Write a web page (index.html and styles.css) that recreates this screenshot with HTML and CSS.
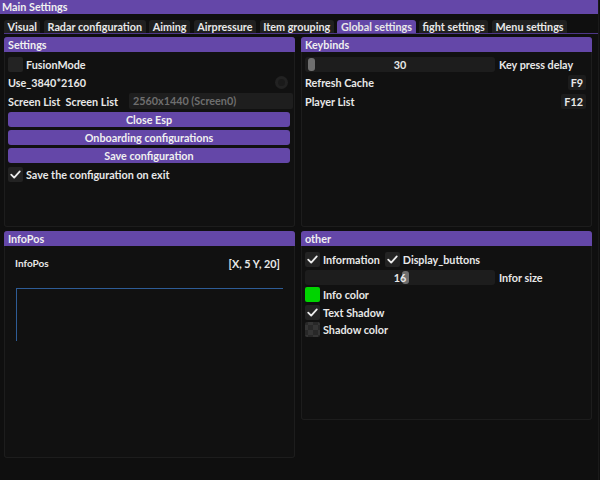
FILE: index.html
```html
<!DOCTYPE html>
<html>
<head>
<meta charset="utf-8">
<link rel="stylesheet" href="styles.css">
</head>
<body>
<div class="window">
  <div class="titlebar">Main Settings</div>
  <div class="tabs">
    <div class="tab">Visual</div>
    <div class="tab">Radar configuration</div>
    <div class="tab">Aiming</div>
    <div class="tab">Airpressure</div>
    <div class="tab">Item grouping</div>
    <div class="tab active">Global settings</div>
    <div class="tab">fight settings</div>
    <div class="tab">Menu settings</div>
  </div>
  <div class="tabline"></div>
  <div class="columns">
    <div class="col">
      <section class="panel p-settings">
        <div class="phead">Settings</div>
        <div class="pbody rows">
          <div class="row"><span class="box"></span><span class="lbl">FusionMode</span></div>
          <div class="row spread"><span>Use_3840*2160</span><span class="radio"><span class="dot"></span></span></div>
          <div class="row"><span class="pair">Screen List&nbsp;&nbsp;Screen List</span><span class="combo">2560x1440 (Screen0)</span></div>
          <div class="btn">Close Esp</div>
          <div class="btn">Onboarding configurations</div>
          <div class="btn">Save configuration</div>
          <div class="row"><span class="box checked"><svg viewBox="0 0 15 15"><path d="M3.2 7.6 L6.2 10.6 L11.8 4.4"/></svg></span><span class="lbl">Save the configuration on exit</span></div>
        </div>
      </section>
      <section class="panel p-info">
        <div class="phead">InfoPos</div>
        <div class="pbody infobody">
          <div class="inforow"><span class="small">InfoPos</span><span>[X, 5 Y, 20]</span></div>
          <div class="corner"></div>
        </div>
      </section>
    </div>
    <div class="col">
      <section class="panel p-keys">
        <div class="phead">Keybinds</div>
        <div class="pbody rows">
          <div class="row"><div class="slider"><span class="grab" style="left:3px"></span><span class="sval">30</span></div><span class="slbl">Key press delay</span></div>
          <div class="row spread"><span>Refresh Cache</span><span class="key">F9</span></div>
          <div class="row spread"><span>Player List</span><span class="key">F12</span></div>
        </div>
      </section>
      <section class="panel p-other">
        <div class="phead">other</div>
        <div class="pbody rows orows">
          <div class="row"><span class="box checked"><svg viewBox="0 0 15 15"><path d="M3.2 7.6 L6.2 10.6 L11.8 4.4"/></svg></span><span class="lbl">Information</span><span class="box checked second"><svg viewBox="0 0 15 15"><path d="M3.2 7.6 L6.2 10.6 L11.8 4.4"/></svg></span><span class="lbl">Display_buttons</span></div>
          <div class="row"><div class="slider"><span class="grab" style="left:97px"></span><span class="sval">16</span></div><span class="slbl">Infor size</span></div>
          <div class="row"><span class="swatch green"></span><span class="lbl">Info color</span></div>
          <div class="row"><span class="box checked"><svg viewBox="0 0 15 15"><path d="M3.2 7.6 L6.2 10.6 L11.8 4.4"/></svg></span><span class="lbl">Text Shadow</span></div>
          <div class="row"><span class="swatch checker"></span><span class="lbl">Shadow color</span></div>
        </div>
      </section>
    </div>
  </div>
</div>
</body>
</html>
```

FILE: styles.css
```css
html, body {
  margin: 0;
  padding: 0;
  background: #0f0f0f;
}
body {
  width: 600px;
  height: 480px;
  overflow: hidden;
  font-family: Lato, "Open Sans", sans-serif;
  font-weight: 700;
  font-size: 10.8px;
  color: #e8e8e8;
}
.window {
  width: 598px;
  height: 480px;
  border-right: 1px solid #1a1a1a;
}
.titlebar {
  height: 14px;
  line-height: 14px;
  background: #6447a8;
  padding-left: 2px;
  color: #f0f0f0;
}
.tabs {
  display: flex;
  gap: 3.5px;
  margin-top: 6px;
  padding-left: 4px;
  height: 13px;
}
.tab {
  height: 13px;
  line-height: 13px;
  padding: 0 3.6px;
  background: #202020;
  border-radius: 3px 3px 0 0;
}
.tab.active {
  background: #6447a8;
}
.tabline {
  margin-left: 4px;
  height: 1px;
  background: #4e3788;
}
.columns {
  display: flex;
  gap: 6px;
  margin-top: 3px;
  padding-left: 4px;
}
.col {
  width: 291px;
  display: flex;
  flex-direction: column;
  gap: 4px;
}
.panel {
  background: #111111;
  box-shadow: inset 0 0 0 1px #1d1d1d;
  border-radius: 3px;
  box-sizing: border-box;
}
.p-settings, .p-keys { height: 190px; }
.p-info { height: 227px; }
.p-other { height: 189px; }
.phead {
  height: 15px;
  line-height: 15px;
  background: #6447a8;
  border-radius: 3px 3px 0 0;
  padding-left: 4px;
  color: #f0f0f0;
}
.pbody {
  padding: 5px 5px 0 4px;
}
.rows {
  display: flex;
  flex-direction: column;
  gap: 3.3px;
}
.orows {
  padding-top: 6px;
  gap: 2.6px;
}
.row {
  height: 15px;
  display: flex;
  align-items: center;
}
.row.spread {
  justify-content: space-between;
}
.box {
  width: 15px;
  height: 15px;
  background: #232323;
  border-radius: 2px;
  flex: none;
  display: flex;
}
.box svg {
  width: 15px;
  height: 15px;
}
.box path {
  fill: none;
  stroke: #ececec;
  stroke-width: 1.8;
  stroke-linecap: round;
  stroke-linejoin: round;
}
.box.second {
  margin-left: 5px;
}
.lbl {
  margin-left: 3px;
}
.radio {
  width: 13px;
  height: 13px;
  border-radius: 50%;
  background: #222222;
  margin-right: 2px;
  display: flex;
  align-items: center;
  justify-content: center;
}
.radio .dot {
  width: 7px;
  height: 7px;
  border-radius: 50%;
  background: #1a1a1a;
}
.pair {
  width: 121px;
  flex: none;
}
.combo {
  flex: 1;
  height: 16px;
  line-height: 16px;
  background: #1e1e1e;
  color: #6e6e6e;
  padding-left: 4px;
  margin-right: -3px;
  border-radius: 2px;
}
.btn {
  height: 15px;
  line-height: 15px;
  background: #6447a8;
  border-radius: 3px;
  text-align: center;
  color: #f0f0f0;
}
.slider {
  position: relative;
  width: 190px;
  height: 15px;
  background: #1d1d1d;
  border-radius: 3px;
  flex: none;
  text-align: center;
  line-height: 15px;
}
.grab {
  position: absolute;
  top: 1px;
  width: 7px;
  height: 13px;
  background: #6f6f6f;
  border-radius: 3px;
}
.sval {
  position: relative;
}
.slbl {
  margin-left: 4px;
}
.key {
  height: 15px;
  line-height: 15px;
  padding: 0 3px;
  background: #1c1c1c;
  border-radius: 2px;
  margin-right: 1px;
}
.swatch {
  width: 15px;
  height: 15px;
  border-radius: 2px;
  flex: none;
}
.green {
  background: #00d400;
}
.checker {
  background-color: #2c2c2c;
  background-image: conic-gradient(#353535 25%, #282828 0 50%, #353535 0 75%, #282828 0);
  background-size: 10px 10px;
  background-position: -2px -2px;
}
.infobody {
  padding: 10px 15px 0 11px;
}
.inforow {
  display: flex;
  justify-content: space-between;
  align-items: center;
  height: 14px;
}
.small {
  font-size: 10px;
}
.corner {
  margin-top: 18px;
  margin-left: 1px;
  width: 266px;
  height: 52px;
  border-top: 1px solid #2e5c96;
  border-left: 1px solid #2e5c96;
}
```
